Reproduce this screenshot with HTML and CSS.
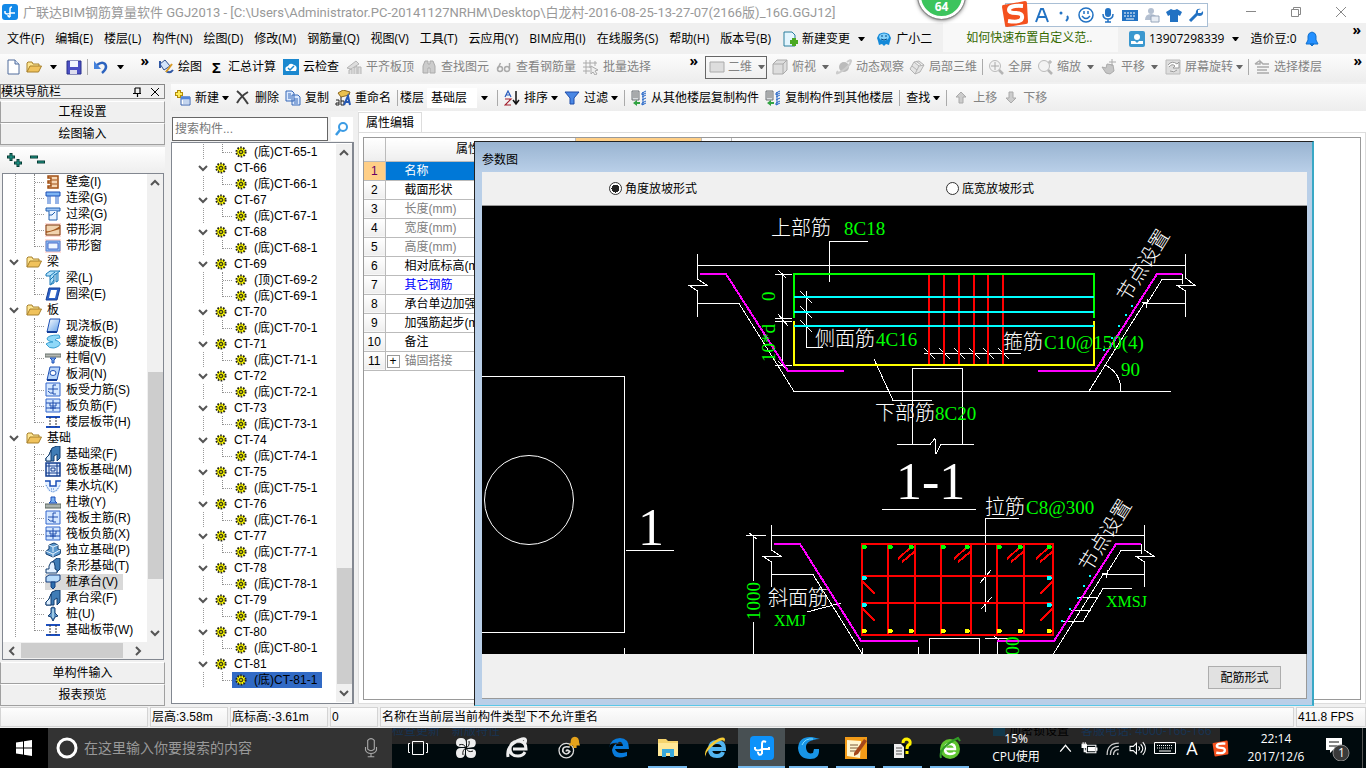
FILE: index.html
```html
<!DOCTYPE html>
<html lang="zh-CN">
	<head>
		<meta charset="utf-8">
		<title>广联达BIM钢筋算量软件 GGJ2013</title>
		<link rel="stylesheet" href="styles.css">
	</head>
	<body>
		<!-- shared icons -->
		<svg class="defs" width="0" height="0">
			<linearGradient id="sky" x2="1" y2="1"><stop offset="0" stop-color="#fff"/><stop offset="1" stop-color="#5f9ee8"/></linearGradient>
			<symbol id="gear" viewBox="0 0 12 12"><circle cx="6" cy="6" r="4.6" fill="#ff0" stroke="#222" stroke-width="2" stroke-dasharray="1.6 1.3"/><circle cx="6" cy="6" r="3.4" fill="#ff0"/><path d="M6 2v8M2 6h8M3 3l6 6M9 3L3 9" stroke="#665f00" stroke-width=".8"/><circle cx="6" cy="6" r="1.5" fill="#ff0" stroke="#222"/></symbol>
			<symbol id="folder" viewBox="0 0 16 16"><path d="M1 13V4l1-1h4l1 2h6v2" fill="#ffe793" stroke="#a7802c"/><path d="M1 13L4 7h11.500l-3 6z" fill="#f0c25c" stroke="#a7802c"/></symbol>
			<symbol id="niche" viewBox="0 0 16 16"><path d="M3 2h10v12H3v-2h3V9H3V7h3V4H3z" fill="#f6d6b4" stroke="#a04f13" stroke-width="1.500"/><path d="M7 6h5M7 10h5" stroke="#a04f13"/></symbol>
			<symbol id="link" viewBox="0 0 16 16"><path d="M1 2h14v4H1z" fill="#7db4f4" stroke="#1d4fb4"/><path d="M3 6v8M5 6v8M11 6v8M13 6v8" stroke="#2c69cf"/></symbol>
			<symbol id="lintel" viewBox="0 0 16 16"><path d="M1 2h14v3H1z" fill="#9cc4f5" stroke="#2360b0"/><path d="M4 5v9h8V5M4 9h3l3-3" fill="#e8f3ff" stroke="#2360b0"/></symbol>
			<symbol id="hole" viewBox="0 0 16 16"><path d="M0 1h16v14H0z" fill="#ffdcd6"/><path d="M1 3h14v10H1z" fill="#f1d3ae" stroke="#7c3d10"/><path d="M1 9q6 1 14-5v3L1 11z" fill="#a35a21"/></symbol>
			<symbol id="win" viewBox="0 0 16 16"><path d="M0 1h16v14H0z" fill="#ffdcd6"/><path d="M1 3h14v10H1z" fill="#8cb8ef" stroke="#5583d2"/><path d="M3 5h10v6H3z" fill="#eff7ff" stroke="#4a6ccb"/></symbol>
			<symbol id="beam" viewBox="0 0 16 16"><path d="M1 4l4-3h10l-4 3-2 1v8l-4 2V6L1 6zM11 4v8l2-1V3" fill="#b3e2fb" stroke="#1877b4"/><path d="M5 6l5-4M5 10l4-4M6 14l3-4" stroke="#1877b4"/></symbol>
			<symbol id="ring" viewBox="0 0 16 16"><path d="M4 2h11l-3 12H1z" fill="#2c61c5" stroke="#153e97"/><path d="M6 4h6l-2 8H4z" fill="#fff"/></symbol>
			<symbol id="slab" viewBox="0 0 16 16"><path d="M5 1h10l-3 13H2z" fill="url(#sky)" stroke="#1d50b5"/><path d="M2 14h10" stroke="#133e99" stroke-width="2"/></symbol>
			<symbol id="spiral" viewBox="0 0 16 16"><path d="M14 1Q2 1 2 5q0 2 6 3-5 0-7 2 3 5 8 4 7-2 6-5-1-2-5-3 1-2 5-2z" fill="#8fd8f8" stroke="#3ba0d2"/></symbol>
			<symbol id="cap" viewBox="0 0 16 16"><path d="M0 4h16v3H0z" fill="#b5b8b2" stroke="#66706c"/><path d="M5 8h6L9 10v3H7v-3z" fill="#78adf0" stroke="#1f50b8"/></symbol>
			<symbol id="slabhole" viewBox="0 0 16 16"><path d="M5 1h10l-3 13H2z" fill="#b8d5fa" stroke="#1d50b5"/><ellipse cx="8" cy="7" rx="3" ry="2.500" fill="#fff" stroke="#1d50b5"/><path d="M2 14h10" stroke="#133e99" stroke-width="2"/></symbol>
			<symbol id="bars" viewBox="0 0 16 16"><path d="M1 1h14v13H1z" fill="#d4e7ff" stroke="#3165cb"/><path d="M1 5h14M1 10h14M8 2v11M5 5v3h6V5M5 10h6" fill="none" stroke="#1e4cad"/></symbol>
			<symbol id="barmain" viewBox="0 0 16 16"><path d="M1 1h14v13H1z" fill="#d4e7ff" stroke="#3165cb"/><path d="M3 7h10M11 3H8v9h3M3 9q2 3 5 2" fill="none" stroke="#1e4cad"/></symbol>
			<symbol id="strip" viewBox="0 0 16 16"><path d="M1 3h14M1 13h14" stroke="#1c4fc0" stroke-width="2"/><path d="M5 3v10M11 3v10" stroke="#333" stroke-dasharray="2 1"/></symbol>
			<symbol id="fbeam" viewBox="0 0 16 16"><path d="M1 15v-3l3-3 3-7 5-2h3v12l-3 3V8l-3 2v5z" fill="#3f7cb6" stroke="#123d6e"/><path d="M1 15v-3l3-3 2-5v11z" fill="#dff0ff" stroke="#123d6e"/></symbol>
			<symbol id="footing" viewBox="0 0 16 16"><path d="M7 4l5-4h3v11l-4 4z" fill="#3f7cb6" stroke="#123d6e"/><path d="M1 15v-4h3V8l2-4h3l1 4v3l2 1v3z" fill="#e3f1ff" stroke="#123d6e"/></symbol>
			<symbol id="raft" viewBox="0 0 16 16"><path d="M1 1h14v13H1z" fill="#e3eeff" stroke="#123d8e" stroke-width="1.500"/><path d="M4 1v13M12 1v13M1 4h14M1 11h14" stroke="#123d8e"/><path d="M6 6h4v3H6z" fill="none" stroke="#123d8e"/></symbol>
			<symbol id="pit" viewBox="0 0 16 16"><path d="M0 3h5v5h6V3h5v4l-3 6-5 2-5-2-3-6z" fill="#e6f1ff"/><path d="M0 3h5v5h6V3h5" fill="none" stroke="#1b4fb8" stroke-width="1.500"/><path d="M1 7l3 5 4 2 4-2 3-5M6 11h4" fill="none" stroke="#3d77cc" stroke-dasharray="1 1"/></symbol>
			<symbol id="pier" viewBox="0 0 16 16"><path d="M0 10h16v4H0z" fill="#abb3ae" stroke="#59645f"/><path d="M6 3h4v4l2 2H4l2-2z" fill="#79b0f0" stroke="#1c4fb8"/></symbol>
			<symbol id="iso" viewBox="0 0 16 16"><path d="M1 9l3-2V3l5-2 4 2v4l3 1-1 4-7 3-7-3z" fill="#5d99ce" stroke="#143e70"/><path d="M4 3l4 2v5M8 5l5-2M1 9l7 3 7-4M8 12v3" fill="none" stroke="#e5f3ff"/></symbol>
			<symbol id="pilecap" viewBox="0 0 16 16"><path d="M1 3l3-2h11v5l-3 2H1z" fill="#b8dbfa" stroke="#153f80"/><path d="M6 8h4v5l-2 2-2-2z" fill="#2e6fae" stroke="#153f80"/></symbol>
			<symbol id="pile" viewBox="0 0 16 16"><path d="M6 2l2-1 2 1v5l3 3-3 1-2 4-2-4-3-1 3-3z" fill="#5b91c6" stroke="#153f70"/><path d="M8 3v9" stroke="#dff"/></symbol>
			<symbol id="down" viewBox="0 0 10 10"><path d="M1 3l4 4 4-4" fill="none" stroke="#555" stroke-width="2"/></symbol>
			<symbol id="sogou" viewBox="0 0 28 28"><path d="M2 5L24 1q2 0 2 2l1 19q0 2-2 2L6 27q-2 0-2-2L1 7q0-2 1-2z" fill="#f4511e"/><path d="M22 6Q8 5 8 10q0 3 7 3t6 5q-1 5-14 3" fill="none" stroke="#fff" stroke-width="4"/></symbol>
			<symbol id="copyfloor" viewBox="0 0 16 16"><path d="M1 1h7v9H1z" fill="#d9dde0" stroke="#6d7175"/><path d="M2 3h5M2 5h5M2 7h5" stroke="#777"/><path d="M12 2v13M15 1l-4 2v2l4-2M15 5l-4 2M15 8l-4 2M15 11l-4 2v2l4-2" fill="none" stroke="#2667c8"/><path d="M6 10v2h3v2H6v2l-4-3z" fill="#32a343"/></symbol>
			<symbol id="mag" viewBox="0 0 16 16"><circle cx="7" cy="7" r="5.500" fill="#f3f3f3" stroke="#bbb"/><path d="M11 11l4 4" stroke="#b5b5b5" stroke-width="2.500"/></symbol>
		</svg>

		<header class="titlebar">
			<svg class="i16" viewBox="0 0 16 16"><rect width="16" height="16" rx="3" fill="#1389e8"/><path d="M3 7v2q2 2 5 0h5M8 13V5q0-2 2-2M8 13q-2 0-2-2" fill="none" stroke="#fff" stroke-width="1.500"/></svg>
			<h1>广联达BIM钢筋算量软件 GGJ2013 - [C:\Users\Administrator.PC-20141127NRHM\Desktop\白龙村-2016-08-25-13-27-07(2166版)_16G.GGJ12]</h1>
			<button class="winbtn"><svg viewBox="0 0 12 12"><path d="M1 5.500h10"/></svg></button>
			<button class="winbtn"><svg viewBox="0 0 12 12"><path d="M1.500 3.500h7v7h-7zM3.500 3.500v-2h7v7h-2"/></svg></button>
			<button class="winbtn"><svg viewBox="0 0 12 12"><path d="M1 1l10 10M11 1L1 11"/></svg></button>
		</header>

		<nav class="menu">
			<button>文件(F)</button><button>编辑(E)</button><button>楼层(L)</button><button>构件(N)</button><button>绘图(D)</button><button>修改(M)</button><button>钢筋量(Q)</button><button>视图(V)</button><button>工具(T)</button><button>云应用(Y)</button><button>BIM应用(I)</button><button>在线服务(S)</button><button>帮助(H)</button><button>版本号(B)</button>
			<button class="tool"><svg class="i16" viewBox="0 0 16 16"><path d="M2 1h8l3 3v11H2z" fill="#e3f5fd" stroke="#2b7e9d"/><path d="M12 7v8M8 11h8" stroke="#4aa821" stroke-width="4"/></svg>新建变更<i class="arrow far"></i></button>
			<button class="tool"><svg class="i16" viewBox="0 0 16 16"><path d="M3 3L1 7l1 3 1 4 3-1 2 2 2-2 3 1 1-4 1-3-2-4q-5-3-10 0z" fill="#1489d8"/><ellipse cx="8" cy="6" rx="5" ry="3.500" fill="#83d1fb"/><path d="M6 4v2M10 4v2M5 8q3 2 6 0" stroke="#064a83" fill="none"/></svg>广小二</button>
			<a class="tip" href="#">如何快速布置自定义范..</a>
			<span class="account">
				<button class="tool"><svg class="i16" viewBox="0 0 16 16"><rect width="16" height="16" rx="2" fill="#3b98cf"/><circle cx="8" cy="6" r="3" fill="#fff"/><path d="M2 10h4l2 2 2-2h4v3H2z" fill="#fff"/></svg>13907298339<i class="arrow far"></i></button>
				<span>造价豆:0</span>
				<svg class="i16" viewBox="0 0 16 16"><path d="M3 11l1-2V5q0-3 4-4 4 1 4 4v4l1 2 1 2H2zM6 13h4l-2 2z" fill="#2490ff" stroke="#1370cc"/></svg>
				<b class="more">»</b>
			</span>
		</nav>

		<div class="toolbar">
			<div class="group files">
				<button class="tool"><svg class="i16" viewBox="0 0 16 16"><path d="M3 1h7l4 4v10H3z" fill="#fff" stroke="#506c9c"/><path d="M10 1v4h4" fill="#d6e3f7" stroke="#506c9c"/></svg></button>
				<button class="tool"><svg class="i16"><use href="#folder"/></svg><i class="arrow far"></i></button>
				<button class="tool"><svg class="i16" viewBox="0 0 16 16"><path d="M1 2h14v13H1z" fill="#4c50c4" stroke="#28308a"/><path d="M4 2h8v6H4z" fill="#f4f6ff"/><path d="M4 11h7v4H4z" fill="#dde"/></svg></button>
				<i class="sep"></i>
				<button class="tool"><svg class="i16" viewBox="0 0 16 16"><path d="M4 6q5-4 8-1 3 4-3 9" fill="none" stroke="#2c63bf" stroke-width="2.500"/><path d="M1 2v8h7z" fill="#4482dc"/></svg><i class="arrow far"></i></button>
				<b class="more">»</b>
			</div>
			<div class="group draw">
				<button class="tool"><svg class="i16" viewBox="0 0 16 16"><path d="M2 5l5-4 5 6-6 4z" fill="#d4e4fa" stroke="#31508b"/><path d="M2 2v7M8 12q4 3 7-1" stroke="#3158a4" stroke-width="2" fill="none"/><path d="M8 13l6-8" stroke="#d89b26" stroke-width="2"/></svg>绘图</button>
				<button class="tool"><b class="sigma">Σ</b>汇总计算</button>
				<button class="tool"><svg class="i16" viewBox="0 0 16 16"><rect width="16" height="16" fill="#1b88cf"/><path d="M3 12q-2-4 2-5 2-4 6-1 4 1 2 6z" fill="#fff"/><path d="M5 9l2 2 4-4" fill="none" stroke="#1b88cf" stroke-width="1.500"/></svg>云检查</button>
				<button class="tool" disabled><svg class="i16" viewBox="0 0 16 16"><path d="M1 9l9-7 3 3-8 5zM3 15v-4l3-1v5M8 15V9l3-2v8M12 15V8h3v7" fill="#ddd" stroke="#b5b5b5"/></svg>平齐板顶</button>
				<button class="tool" disabled><svg class="i16" viewBox="0 0 16 16"><path d="M2 7l2-5h3v3h2V2h3l2 5v7H9V9H7v5H2z" fill="#ccc" stroke="#aaa"/></svg>查找图元</button>
				<button class="tool" disabled><svg class="i16" viewBox="0 0 16 16"><circle cx="4" cy="10" r="2.500" fill="none" stroke="#aaa" stroke-width="1.500"/><circle cx="11" cy="10" r="2.500" fill="none" stroke="#aaa" stroke-width="1.500"/><path d="M1.500 10l3-6M13.500 10V4" stroke="#aaa" stroke-width="1.500"/></svg>查看钢筋量</button>
				<button class="tool" disabled><svg class="i16" viewBox="0 0 16 16"><path d="M3 1v14M7 1v8M0 4h14M0 8h8M0 12h7M12 2v5" stroke="#aaa"/><path d="M8 7l7 4-3 1 2 3-2 1-2-3-2 2z" fill="#eee" stroke="#aaa"/></svg>批量选择</button>
				<b class="more">»</b>
			</div>
			<div class="group view">
				<label class="dim"><svg class="i16" viewBox="0 0 16 16"><path d="M1 3h14v10H1z" fill="#ddd" stroke="#aaa"/></svg><select disabled><option>二维</option></select><i class="arrow"></i></label>
				<button class="tool" disabled><svg class="i16" viewBox="0 0 16 16"><path d="M1 5l4-4h10v10l-4 4H1z" fill="#ddd" stroke="#aaa"/><path d="M1 5h10v10M11 5l4-4" fill="none" stroke="#aaa"/></svg>俯视<i class="arrow far"></i></button>
				<button class="tool" disabled><svg class="i16" viewBox="0 0 16 16"><circle cx="8" cy="8" r="5" fill="#bbb"/><path d="M2 12Q-2 17 6 12T15 2q0-2-4 1" fill="none" stroke="#ccc" stroke-width="2"/></svg>动态观察</button>
				<button class="tool" disabled><svg class="i16" viewBox="0 0 16 16"><path d="M1 10l4-7 5-1 5 4-4 7-5 2zM5 3l5 4 5-1M10 7l-4 8M3 7l5 4M7 2l5 4" fill="#e4e4e4" stroke="#b3b3b3"/></svg>局部三维</button>
				<i class="sep"></i>
				<button class="tool" disabled><svg class="i16"><use href="#mag"/><path d="M7 3v8M3 7h8" stroke="#aaa"/></svg>全屏</button>
				<button class="tool" disabled><svg class="i16"><use href="#mag"/><path d="M11 3h4M13 1v4" stroke="#aaa"/></svg>缩放<i class="arrow far"></i></button>
				<button class="tool" disabled><svg class="i16" viewBox="0 0 16 16"><path d="M1 8l4 1 1-4 6 1 1 6-4 3-4-1z" fill="#c5c5c5" stroke="#aaa"/><path d="M11 0v7M8 3h7" stroke="#aaa"/></svg>平移<i class="arrow far"></i></button>
				<button class="tool" disabled><svg class="i16" viewBox="0 0 16 16"><path d="M1 1h14v14H1z" fill="#ddd" stroke="#bbb"/><path d="M3 6q4-5 9-1l2-2v6H8l2-2Q7 4 4 8M12 11q-3 3-7 1" fill="#fff" stroke="#999"/></svg>屏幕旋转<i class="arrow"></i></button>
				<i class="sep"></i>
				<button class="tool" disabled><svg class="i16" viewBox="0 0 16 16"><path d="M1 5h5V2l3 3h6M3 8h12M3 11h10M3 14h12M1 5l4-3" fill="none" stroke="#aaa" stroke-width="1.500"/></svg>选择楼层</button>
				<b class="more">»</b>
			</div>
		</div>

		<main>
			<aside class="nav">
				<div class="nav-title"><span>模块导航栏</span>
					<button><svg viewBox="0 0 10 10"><path d="M3 1h5v5M3 1v5M1 6.500h8M5.500 6v4" fill="none" stroke="#000" stroke-width="1.200"/></svg></button>
					<button><svg viewBox="0 0 10 10"><path d="M1 1l8 8M9 1L1 9" stroke="#000"/></svg></button>
				</div>
				<button class="section">工程设置</button>
				<button class="section">绘图输入</button>
				<div class="nav-tools">
					<svg viewBox="0 0 40 16"><path d="M1 5h8M5 1v8M8 11h8M12 7v8M24 5h8M31 10h8" stroke="#043a33" stroke-width="3"/><path d="M2 5h6M5 2v6M9 11h6M12 8v6M25 5h6M32 10h6" stroke="#21a293"/></svg>
				</div>
				<div class="box nav-box">
					<div class="scroll-row">
						<ul class="tree" id="modules"></ul>
						<div class="vbar"><svg class="up"><use href="#down"/></svg><i class="thumb modules-thumb"></i><svg><use href="#down"/></svg></div>
					</div>
					<div class="hbar"><svg class="left"><use href="#down"/></svg><i class="thumb"></i><svg class="right"><use href="#down"/></svg></div>
				</div>
				<button class="section">单构件输入</button>
				<button class="section">报表预览</button>
			</aside>

			<section class="work">
				<div class="toolbar second">
					<button class="tool"><svg class="i16" viewBox="0 0 16 16"><path d="M6 7h9v8H6z" fill="#fff" stroke="#3561ae"/><path d="M6 8h9" stroke="#5185dc" stroke-width="3"/><path d="M8 11h6M8 13h6" stroke="#88aadd"/><path d="M4 0v8M0 4h8" stroke="#b38c0b" stroke-width="4"/><path d="M4 1v6M1 4h6" stroke="#ffec59" stroke-width="2"/></svg>新建<i class="arrow"></i></button>
					<button class="tool"><svg class="i16" viewBox="0 0 16 16"><path d="M2 1q5 4 11 13M13 2Q6 6 2 13" fill="none" stroke="#404040" stroke-width="2"/></svg>删除</button>
					<button class="tool"><svg class="i16" viewBox="0 0 16 16"><path d="M1 1h6l2 2v8H1zM7 5h6l2 2v8H7z" fill="#dceaff" stroke="#3768b7"/><path d="M3 4h3M3 6h3M3 8h3M9 9h4M9 11h4M9 13h4" stroke="#3768b7"/></svg>复制</button>
					<button class="tool"><svg class="i16" viewBox="0 0 16 16"><path d="M3 3l5-3 7 2-1 3-8 2z" fill="#eac14f" stroke="#8c6720"/><path d="M1 10h3v5H1v-2h3M6 7v8h3v-4H6" fill="none" stroke="#222"/><path d="M9 15l4-9 2 9M11 12h4" fill="none" stroke="#2759b3" stroke-width="2"/></svg>重命名</button>
					<i class="sep"></i>
					<label class="floor">楼层<select><option>基础层</option></select><i class="arrow"></i></label>
					<i class="sep"></i>
					<button class="tool"><svg class="i16" viewBox="0 0 16 16"><path d="M1 7l3-6 3 6M2 5h4" fill="none" stroke="#275bbb" stroke-width="1.200"/><path d="M1 9h6l-6 6h6" fill="none" stroke="#a21c2b" stroke-width="1.200"/><path d="M12 1v12M9 10l3 4 3-4" fill="none" stroke="#111" stroke-width="1.500"/></svg>排序<i class="arrow"></i></button>
					<button class="tool"><svg class="i16" viewBox="0 0 16 16"><path d="M1 2h14l-5 6v6H6V8z" fill="#4a87e4" stroke="#1e4ca9"/></svg>过滤<i class="arrow"></i></button>
					<i class="sep"></i>
					<button class="tool"><svg class="i16"><use href="#copyfloor"/></svg>从其他楼层复制构件</button>
					<button class="tool"><svg class="i16"><use href="#copyfloor"/></svg>复制构件到其他楼层</button>
					<i class="sep"></i>
					<button class="tool">查找<i class="arrow"></i></button>
					<i class="sep"></i>
					<button class="tool" disabled><svg class="i16" viewBox="0 0 16 16"><path d="M8 2l5 5h-3v6H6V7H3z" fill="#ccc" stroke="#aaa"/></svg>上移</button>
					<button class="tool" disabled><svg class="i16" viewBox="0 0 16 16"><path d="M8 13L3 8h3V2h4v6h3z" fill="#ccc" stroke="#aaa"/></svg>下移</button>
				</div>
				<div class="panes">
					<div class="parts">
						<div class="search">
							<input type="text" placeholder="搜索构件..." aria-label="搜索构件...">
							<button><svg class="i16" viewBox="0 0 16 16"><circle cx="9" cy="6" r="4" fill="#fff" stroke="#3b9be4" stroke-width="2"/><path d="M6 9l-4 5" stroke="#3b9be4" stroke-width="2.500"/></svg></button>
						</div>
						<div class="box scroll-row">
							<ul class="tree parts-tree" id="parts"></ul>
							<div class="vbar"><svg class="up"><use href="#down"/></svg><i class="thumb parts-thumb"></i><svg><use href="#down"/></svg></div>
						</div>
					</div>
					<div class="props">
						<div class="tabs"><button>属性编辑</button></div>
						<div class="props-body">
							<div class="grid-box">
								<table>
									<thead><tr><th></th><th>属性名称</th><th class="hot"></th><th></th></tr></thead>
									<tbody>
										<tr class="sel"><th>1</th><td>名称</td><td></td><td></td></tr>
										<tr><th>2</th><td>截面形状</td><td></td><td></td></tr>
										<tr class="off"><th>3</th><td>长度(mm)</td><td></td><td></td></tr>
										<tr class="off"><th>4</th><td>宽度(mm)</td><td></td><td></td></tr>
										<tr class="off"><th>5</th><td>高度(mm)</td><td></td><td></td></tr>
										<tr><th>6</th><td>相对底标高(m)</td><td></td><td></td></tr>
										<tr class="blue"><th>7</th><td>其它钢筋</td><td></td><td></td></tr>
										<tr><th>8</th><td>承台单边加强筋</td><td></td><td></td></tr>
										<tr><th>9</th><td>加强筋起步(mm)</td><td></td><td></td></tr>
										<tr><th>10</th><td>备注</td><td></td><td></td></tr>
										<tr class="off fold"><th>11</th><td><button>+</button>锚固搭接</td><td></td><td></td></tr>
									</tbody>
								</table>
							</div>
						</div>
					</div>
				</div>
			</section>
		</main>

		<div class="status">
			<span class="s-blank"></span><span class="s-height">层高:3.58m</span><span class="s-base">底标高:-3.61m</span><span class="s-zero">0</span><span class="s-msg">名称在当前层当前构件类型下不允许重名</span><span class="s-fps">411.8 FPS</span>
		</div>

		<footer class="taskbar">
			<button class="start"><svg viewBox="0 0 16 16"><path d="M0 2.500l7-1v6H0zM8 1.300L16 0v7.500H8zM0 8.500h7v6l-7-1zM8 8.500h8V16l-8-1.200z" fill="#fff"/></svg></button>
			<label class="cortana"><svg viewBox="0 0 22 22"><circle cx="11" cy="11" r="9" fill="none" stroke="#fff" stroke-width="3"/></svg><input type="text" placeholder="在这里输入你要搜索的内容" aria-label="在这里输入你要搜索的内容"><svg viewBox="0 0 16 20"><path d="M5 3q3-3 6 0v8q-3 3-6 0zM3 9v3q1 3 5 3t5-3V9M8 15v3M5 18h6" fill="none" stroke="#aaa"/></svg></label>
			<div class="apps">
				<span class="ghost"><span>检查更新</span><span>新版特性</span></span>
				<span class="ghost right"><i></i><span class="dark">加密锁设置</span><span>客服电话: 4000-166-166</span></span>
				<button class="view"><svg viewBox="0 0 24 24"><path d="M6.500 5.500h11v13h-11zM4 7.500H2.500v9H4M20 7.500h1.500v9H20" fill="none" stroke="#fff"/></svg></button>
				<button><svg viewBox="0 0 24 24"><g fill="#eee"><path d="M2 7q0-5 5-5 5 0 5 5v4H7q-5 0-5-4z"/><path d="M13 4q4-3 8 0 2 4-1 7l-7 1z"/><path d="M2 17q0-5 5-5h4v5q0 5-5 5-4 0-4-5z"/><path d="M12 13h6q4 0 4 4 0 5-5 5-5 0-5-4z"/></g><path d="M5 9q5-2 7 3t7 3M15 5q1 5-3 7t-3 7" fill="none" stroke="#111"/></svg></button>
				<button><svg viewBox="0 0 24 24"><path d="M8 13h13q0-8-8-8-8 1-8 8 0 7 8 7 5 0 7-4M3 21Q1 8 17 3q5-1 3 4" fill="none" stroke="#eee" stroke-width="3"/></svg></button>
				<button><svg viewBox="0 0 28 28"><circle cx="12" cy="17" r="8.500" fill="none" stroke="#ddd" stroke-width="1.500"/><path d="M16 13q-9-2-8 5 4 6 8 0-4-3-4 0" fill="none" stroke="#ddd" stroke-width="2"/><path d="M15 11l2-3q0-7 5-7t5 7l1 3zM20 11h4v3h-4z" fill="#e4a21b"/></svg></button>
				<button><svg viewBox="0 0 24 24"><path d="M2 12Q4 2 13 2q9 0 9 11H8q2 6 12 3v4Q6 25 5 14q1-6 7-7-10-1-10 5zM9 10h7q-1-5-4-4-3 1-3 4z" fill="#087bdc"/></svg></button>
				<button class="run wide"><svg viewBox="0 0 24 24"><path d="M2 3h8l2 2h10v15H2z" fill="#f5d36c"/><path d="M2 7h20v13H2z" fill="#ffe897"/><path d="M6 21v-8h12v8h-4v-4h-4v4z" fill="#39a9dc"/></svg></button>
				<button><svg viewBox="0 0 24 24"><path d="M7 13h14q0-7-7-7-7 0-7 7 0 7 7 7 5 0 6-4" fill="none" stroke="#52b4ef" stroke-width="4"/><path d="M3 22Q-1 15 10 6q10-7 12-3 0 2-1 3 0-4-8 1Q0 17 3 22z" fill="#f5cb36"/></svg></button>
				<button class="run active"><svg viewBox="0 0 24 24"><rect width="24" height="24" rx="4" fill="#0d92fa"/><path d="M5 11v2q2 3 7 0h7v-2M12 18V8q0-4 4-2M12 18q-4 2-4-2" fill="none" stroke="#fff" stroke-width="2"/></svg></button>
				<button class="run"><svg viewBox="0 0 24 24"><path d="M23 3Q8 4 9 12q1 7 7 5l1-4h5q1 10-9 10Q2 23 1 12 2 0 15 1z" fill="#1895e6"/><path d="M5 9q3-7 11-6" fill="none" stroke="#81dfff"/></svg></button>
				<button class="run"><svg viewBox="0 0 24 24"><rect x="1" y="1" width="22" height="22" fill="#f29b18"/><path d="M3 4l14 1-1 17-13-2z" fill="#fff5cf"/><path d="M6 9h8M6 12h8M6 15h6" stroke="#78583a"/><path d="M10 17L20 3l3 2-9 13-4 2z" fill="#a5471b"/></svg></button>
				<button class="run"><svg viewBox="0 0 24 24"><path d="M3 8h7l3 3v11H3z" fill="#eee"/><path d="M5 12h6M5 15h6M5 18h6" stroke="#555"/><path d="M12 7q0-4 4-4 4 1 3 5-3 1-3 5M16 15v3" fill="none" stroke="#fff200" stroke-width="3"/></svg></button>
				<button class="run wide"><svg viewBox="0 0 24 24"><circle cx="12" cy="13" r="10" fill="#61c632"/><path d="M7 13h10q0-5-5-5t-5 5q0 5 5 5 4 0 5-2" fill="none" stroke="#fff" stroke-width="2.500"/><path d="M3 22Q0 12 20 2l2 3" fill="none" stroke="#329e26" stroke-width="2"/></svg></button>
			</div>
			<div class="cpu">15%<br>CPU使用</div>
			<div class="tray">
				<svg viewBox="0 0 16 16"><path d="M3 11l5-6 5 6" fill="none" stroke="#fff" stroke-width="1.200"/></svg>
				<svg viewBox="0 0 16 16"><path d="M5 5h9v7H5zM15 7v3" fill="none" stroke="#fff"/><path d="M7 7h6v3H7zM1 4h4v3H1zM2 2v2M4 2v2M3 7v4h2" fill="#fff" stroke="#fff"/></svg>
				<svg viewBox="0 0 16 16"><path d="M12 14v-2M8 14q0-5 5-5M5 14q0-8 8-8M2 14Q2 3 13 3" fill="none" stroke="#ccc" stroke-width="1.200"/></svg>
				<svg viewBox="0 0 16 16"><path d="M1 6h3l3-3v10l-3-3H1zM9 6q2 2 0 4M11 4q4 4 0 8M13 2q5 6 0 12" fill="none" stroke="#fff"/></svg>
				<svg class="kb" viewBox="0 0 24 14"><path d="M1.500 1.500h21v11h-21z" fill="none" stroke="#fff"/><path d="M4 4.500h16M4 7h16" stroke="#fff" stroke-dasharray="1 1"/><path d="M6 10h12" stroke="#fff"/></svg>
				<span class="lang">A</span>
				<svg viewBox="0 0 28 28"><use href="#sogou"/></svg>
			</div>
			<div class="clock">22:14<br>2017/12/6</div>
			<button class="notice"><svg viewBox="0 0 26 26"><path d="M2 3h16v12H9l-3 3v-3H2z" fill="#fff"/><path d="M5 7h10M5 11h8" stroke="#111"/><circle cx="17" cy="18" r="8" fill="#3a3a3a" stroke="#888"/><text x="14" y="22">1</text></svg></button>
		</footer>

		<!-- floating things over the main window -->
		<div class="ball">64</div>
		<div class="ime">
			<svg class="logo"><use href="#sogou"/></svg>
			<svg viewBox="0 0 16 16"><path d="M2 15L7 2h2l5 13M4 10h8" fill="none" stroke="#2272c3" stroke-width="2"/></svg>
			<svg viewBox="0 0 16 16"><circle cx="5" cy="6" r="1.500" fill="#2272c3"/><path d="M11 9q2 2-1 5" fill="none" stroke="#2272c3" stroke-width="2"/></svg>
			<svg viewBox="0 0 16 16"><circle cx="8" cy="8" r="7" fill="none" stroke="#2272c3" stroke-width="1.500"/><path d="M6 4v3M10 4v3M4 9q4 5 8 0" fill="none" stroke="#2272c3" stroke-width="1.500"/></svg>
			<svg viewBox="0 0 16 16"><rect x="5" y="1" width="6" height="9" rx="3" fill="#2272c3"/><path d="M3 7q0 5 5 5t5-5M8 12v3M5 15h6" fill="none" stroke="#2272c3" stroke-width="1.500"/></svg>
			<svg viewBox="0 0 16 16"><rect y="3" width="16" height="11" fill="#2272c3"/><path d="M2 6h12M2 9h12" stroke="#fff" stroke-dasharray="2 1"/><path d="M4 12h8" stroke="#fff"/></svg>
			<svg viewBox="0 0 16 16"><circle cx="7" cy="4" r="3" fill="#b4c0d1"/><path d="M1 13q0-6 6-6t6 6z" fill="#b4c0d1"/><path d="M7 9h8v6H7z" fill="#e8edf4" stroke="#97a6bb"/></svg>
			<svg viewBox="0 0 16 16"><path d="M5 2q3 2 6 0l5 3-2 4-2-1v7H4V8L2 9 0 5z" fill="#2272c3"/></svg>
			<svg viewBox="0 0 16 16"><path d="M2 14l7-7" stroke="#2272c3" stroke-width="3"/><path d="M13 2l-3 1v3h3l2-2q1 5-4 5-4-1-3-5 1-3 5-2z" fill="#2272c3"/></svg>
		</div>

		<section class="dialog">
			<h2>参数图</h2>
			<div class="options">
				<label><input type="radio" name="form" checked>角度放坡形式</label>
				<label><input type="radio" name="form">底宽放坡形式</label>
			</div>
			<svg class="cad" viewBox="482 206 825 448" preserveAspectRatio="xMinYMin slice">
				<!-- plan -->
				<g class="w">
					<path d="M482 376.500h142.500v256H482M624.500 648v8M626 550.500h48"/>
					<circle cx="529" cy="500" r="44.500"/>
				</g>
				<text class="big" x="638" y="545">1</text>

				<!-- section 1-1 -->
				<g class="w">
					<path d="M697 265.500h488M697.500 254v25l9 6h-18l9 6v26M697 303.500h42l55 88h377"/>
					<path d="M829.500 282v-40.500H868M782.500 273v92M775 274.500h17M775 318.500h17M775 321.500h17M775 365.500h17M778 270l8 8M778 314l10 12M778 361l10 10"/>
					<path d="M806.500 291v56.500H823M800 291l12 12M800 306l12 12M800 320l12 12"/>
					<path d="M924 353.500h97M924 348l11 11M939 348l11 11M954 348l11 11M969 348l11 11M983 348l11 11M998 348l11 11"/>
					<path d="M874 359l19 41.500h39M912.500 444v-75.500h50V444M897 444.500h33l5-6 1 15 5-9h33"/>
					<path d="M1185.500 254v24l9 7h-18l9 6v26M1185 303.500h-41L1089 391M1182.500 274v10M1182 279.500h-20l-15 24M1142 302l9 2M1148 299l-2 9M1105 365q16 8 16 26"/>
				</g>
				<path class="m" d="M700 274h26l62 97h56M1038 371h57l62-97h25"/>
				<path class="g" d="M794 318v-44h300v44"/>
				<path class="r" d="M929 275v90M944 275v90M959 275v90M974 275v90M988 275v90M1003 275v90"/>
				<path class="y" d="M794 321v44h300v-44"/>
				<path class="c" d="M794 297h300M794 312h300M794 326h300"/>
				<path class="dot c" d="M1132 306h.1M1126 315h.1M1119 326h.1M1112 338h.1M1104 350h.1"/>
				<text x="771" y="235">上部筋</text><text class="n" x="844" y="235">8C18</text>
				<text x="815" y="346">侧面筋</text><text class="n" x="876" y="346">4C16</text>
				<text x="1003" y="349">箍筋</text><text class="n" x="1044" y="349">C10@150(4)</text>
				<text x="875" y="420">下部筋</text><text class="n" x="935" y="420">8C20</text>
				<text class="n" x="1121" y="376">90</text>
				<text class="n" transform="translate(775 301) rotate(-90)">0</text>
				<text class="n" transform="translate(775 362) rotate(-90)">10*d</text>
				<text transform="translate(1128 303) rotate(-58)">节点设置</text>

				<text class="big" x="896" y="499">1-1</text>

				<!-- cross section -->
				<g class="w">
					<path d="M882 509.500h94M985.500 612v-93.500h33M980 583l11-13M981 609l11-12"/>
					<path d="M771 535.500h373M771.500 525v25l9 6h-18l9 6v25M771 574.500h42l49 79M862.500 648v8M918.500 647v9M929.500 656v-17.500h50V656"/>
					<path d="M746 535.500h20M753.500 535v46M753.500 622v34M749 533l8 6M807 612l34-9M985 638.500h24M997.500 641v15M994 636l5 4"/>
					<path d="M1144.500 525v25l9 6h-18l9 6v25M1144 574.500h-41l-50 80M1141.500 544v10M1141 550.500h-20l-15 24M1102 573l9 2M1108 570l-2 8"/>
					<path d="M1132 588.500h-29l-20 33h-21M1098 597.500h-19M1091 610.500h-20"/>
				</g>
				<path class="m" d="M774 544h26l61 97h57M997 641h57l62-97h25"/>
				<path class="r" d="M862 544h191v91H862zM888 544v91M915 544v91M941 544v91M971 544v91M997 544v91M1024 544v91M862 576h191M862 603h191"/>
				<path class="r" d="M912 546l-14 13M914 552l-12 10M968 546l-14 13M970 552l-12 10M1021 546l-14 13M1023 552l-12 10M1050 546l-14 13M1052 552l-12 10M863 582l12 12M863 609l12 12M1052 582l-12 12M1052 609l-12 12"/>
				<path class="dot big-dot g" d="M864 547h.1M890 547h.1M911 547h.1M943 547h.1M967 547h.1M999 547h.1M1020 547h.1M1049 547h.1"/>
				<path class="dot big-dot y" d="M864 631h.1M890 631h.1M911 631h.1M943 631h.1M967 631h.1M999 631h.1M1020 631h.1M1049 631h.1"/>
				<path class="dot big-dot c" d="M864 578h.1M864 605h.1M1049 578h.1M1049 605h.1"/>
				<path class="dot c" d="M1090 576h.1M1084 586h.1M1078 598h.1M1070 609h.1M1062 621h.1"/>
				<text x="985" y="514">拉筋</text><text class="n" x="1026" y="514">C8@300</text>
				<text x="768" y="605">斜面筋</text><text class="n small" x="774" y="626">XMJ</text>
				<text class="n small" x="1106" y="607">XMSJ</text>
				<text class="n" transform="translate(760 620) rotate(-90)">1000</text>
				<text class="n" transform="translate(1019 665) rotate(-90)">000</text>
				<text transform="translate(1090 573) rotate(-58)">节点设置</text>
			</svg>
			<div class="actions"><button>配筋形式</button></div>
		</section>

		<script src="script.js"></script>
	</body>
</html>
```
FILE: styles.css
```css
* {
	box-sizing: border-box;
	margin: 0; padding: 0;
}

body {
	display: flex;
	flex-direction: column;
	height: 100vh;
	overflow: hidden;
	position: relative;
	font: 12px/16px "Open Sans", "Noto Sans CJK SC", sans-serif;
	color: #000;
	background: #f0f0f0;
}

button, input, select {
	font: inherit;
	color: inherit;
	border: 0;
	background: none;
	white-space: nowrap;
}

svg { display: block; flex: none; }
ul { list-style: none; }

.defs { position: absolute; }
.i16 { width: 16px; height: 16px; }

.arrow {
	flex: none;
	width: 7px;
	margin-left: 1px;
	border: 3px solid transparent;
	border-top: 4px solid #000;
	border-bottom: 0;
}

.arrow.far { margin: 0 4px; }

.sep {
	flex: none;
	width: 1px; height: 16px;
	background: #aaa;
}

.more {
	margin-left: auto;
	align-self: flex-start;
	font-size: 14px;
	line-height: 14px;
}

/* title and menu */

.titlebar {
	display: flex;
	align-items: center;
	gap: 5px;
	flex: none;
	height: 23px;
	padding: 0 11px 0 2px;
	background: #fff;
}

.titlebar h1 {
	flex: 1;
	font: 13px "Roboto", "Noto Sans CJK SC", sans-serif;
	color: #999;
	white-space: nowrap;
}

.winbtn { width: 40px; padding-left: 20px; }
.winbtn svg { width: 12px; fill: none; stroke: #888; }

.menu {
	display: flex;
	align-items: center;
	gap: 11px;
	flex: none;
	height: 31px;
	padding: 0 5px 0 7px;
	white-space: nowrap;
}

.menu .tool { gap: 4px; }
.menu > .tool .arrow { margin-right: 0; }

.tip {
	flex: 1;
	align-self: stretch;
	padding: 7px 0 0 23px;
	margin-bottom: 2px;
	color: #356a00;
	background: #f8f8f8;
	text-decoration: none;
}

.account {
	display: flex;
	align-items: center;
	align-self: stretch;
	gap: 7px;
	width: 232px;
}

/* toolbars */

.toolbar {
	display: flex;
	flex: none;
	height: 28px;
	margin-bottom: 2px;
	background: linear-gradient(#fcfcfc, #ededed);
}

.group {
	display: flex;
	align-items: center;
	gap: 7px;
	padding: 0 4px 2px 5px;
}

.files { flex: 0 0 153px; gap: 5px; }
.draw { flex: 0 0 549px; }
.view { flex: 1; gap: 5px; padding-left: 3px; }

.tool {
	display: flex;
	align-items: center;
	gap: 4px;
	flex: none;
}

.tool .arrow { margin-left: -1px; }
.tool .arrow.far { margin-left: 4px; }
.tool:disabled { color: #838383; }
.tool:disabled .arrow { border-top-color: #666; }
.view .tool .arrow.far { margin: 0 2px; }

.sigma { width: 15px; font-size: 15px; }

.dim {
	display: flex;
	align-items: center;
	gap: 3px;
	height: 23px;
	width: 62px;
	padding: 0 3px;
	border: 1px solid #666;
	color: #838383;
}

.dim select {
	width: 26px;
	appearance: none;
	opacity: 1;
}

.dim .arrow { margin-left: 2px; border-top-color: #666; }

.second {
	align-items: center;
	gap: 6px;
	height: 27px;
	margin: 0;
	padding-left: 4px;
}

.floor {
	display: flex;
	align-items: center;
	gap: 3px;
	margin-left: -4px;
}

.floor select {
	appearance: none;
	width: 50px;
	height: 20px;
	padding-left: 4px;
	background: #fff;
}

.floor .arrow { margin-right: 3px; }

/* module panel */

main {
	display: flex;
	gap: 6px;
	flex: 1;
	min-height: 0;
	font-family: "Liberation Sans", "Noto Sans CJK SC", sans-serif;
}

.nav {
	display: flex;
	flex-direction: column;
	flex: none;
	width: 165px;
}

.nav-title {
	display: flex;
	align-items: center;
	height: 15px;
	border: 1px solid #888;
	margin-bottom: 2px;
}

.nav-title span { flex: 1; }
.nav-title button { width: 18px; padding-left: 4px; }
.nav-title svg { width: 10px; }

.section {
	flex: none;
	height: 22px;
	border: 1px solid #a0a0a0;
	border-top-color: #fff;
	background: #f0f0f0;
}

.nav-tools {
	height: 28px;
	padding: 5px 6px;
	border-top: 2px solid #ddd;
	background: linear-gradient(#fff, #eee);
}

.nav-tools svg { width: 40px; height: 16px; }

.box {
	border: 1px solid #828790;
	background: #fff;
}

.nav-box {
	display: flex;
	flex-direction: column;
	flex: 1;
	min-height: 0;
	margin: 0 1px 2px 2px;
}

.scroll-row {
	display: flex;
	flex: 1;
	min-height: 0;
}

.tree {
	flex: 1;
	overflow: hidden;
	position: relative;
}

.tree li {
	display: flex;
	align-items: center;
	height: 16px;
	padding-left: 6px;
	white-space: nowrap;
}

.tree li svg { width: 16px; height: 16px; }
.tree .chev { width: 10px; height: 10px; margin-right: 7px; }

.tree .name {
	display: flex;
	align-items: center;
	gap: 5px;
	padding: 0 5px 0 0;
}

.tree .twig {
	width: 11px; height: 16px;
	margin: 0 0 0 25px;
	background: linear-gradient(90deg, #999 1px, transparent 1px) 0 0 / 2px 1px repeat-x;
	background-position: 0 8px;
	border-left: 1px dotted #888;
}

.tree .child { background: linear-gradient(#999 50%, transparent 50%) 12px 0 / 1px 2px repeat-y; }
.tree .child.last .twig { height: 9px; align-self: flex-start; }
.tree .chosen .name { background: #d9d9d9; }

.vbar, .hbar {
	display: flex;
	flex: none;
	flex-direction: column;
	align-items: center;
	width: 16px;
	padding: 4px 0;
	background: #f0f0f0;
}

.vbar svg, .hbar svg { width: 10px; height: 10px; }
.vbar .up { transform: rotate(180deg); }
.hbar .left { transform: rotate(90deg); }
.hbar .right { transform: rotate(-90deg); margin-left: 10px; }
.thumb { background: #cdcdcd; }
.vbar .thumb { width: 15px; margin-bottom: auto; }
.modules-thumb { height: 45%; margin-top: 184px; }
.parts-thumb { height: 116px; margin-top: auto; }
.vbar .parts-thumb { margin-bottom: 4px; }

.hbar {
	flex-direction: row;
	width: 100%; height: 17px;
	padding: 0 4px;
}

.hbar .thumb { width: 102px; height: 15px; margin-left: 4px; }

/* component list */

.work {
	display: flex;
	flex-direction: column;
	flex: 1;
	min-width: 0;
}

.panes {
	display: flex;
	gap: 4px;
	flex: 1;
	min-height: 0;
}

.parts {
	display: flex;
	flex-direction: column;
	flex: none;
	width: 183px;
	padding: 5px 0 2px;
}

.search {
	display: flex;
	gap: 3px;
	height: 26px;
	padding: 1px;
}

.search input {
	flex: 1;
	min-width: 0;
	padding: 0 2px;
	border: 1px solid #666;
	background: #fff;
}

.search button {
	width: 22px;
	padding: 4px 3px;
	background: #fff;
}

::placeholder { color: #777; opacity: 1; }

.parts .box { border-right-width: 2px; padding: 1px 0; }
.parts .tree li { padding-left: 26px; }
.parts .tree .chev { margin-right: 4px; }
.parts .tree li .name svg { width: 12px; height: 12px; }
.parts .tree .name { gap: 7px; padding-left: 3px; }
.parts .tree .twig { margin-left: 24px; }
.parts .tree .child { background-position: 31px 0; }
.parts .tree li.child .twig { width: 10px; }
.parts .tree .chosen .name { background: #316ac5; }

/* property grid */

.props {
	display: flex;
	flex-direction: column;
	flex: 1;
	min-width: 0;
}

.tabs { height: 21px; padding-top: 1px; background: #fff; }

.tabs button {
	height: 21px;
	padding: 0 7px;
	border: 1px solid #ddd;
	border-bottom: 0;
	background: #fff;
}

.props-body {
	flex: 1;
	min-height: 0;
	padding: 4px 4px 3px;
	margin-bottom: 2px;
	border: 1px solid #ddd;
	background: #fff;
}

.grid-box {
	height: 100%;
	border: 1px solid #999;
}

table {
	width: 368px;
	table-layout: fixed;
	border-collapse: collapse;
}

tr { height: 19px; }
thead tr { height: 23px; }

th, td {
	border: solid #bbb;
	border-width: 0 1px 1px 0;
	font-weight: normal;
	line-height: 16px;
	white-space: nowrap;
	overflow: hidden;
}

th { background: linear-gradient(#fff, #eee); }
th:first-child { width: 21px; }
th:nth-child(2) { width: 190px; }
th:nth-child(3) { width: 126px; }
td { padding-left: 19px; }
.hot, .sel th { background: #ffcf87; }
.sel th { color: #606; }
.sel td { color: #fff; background: #0078d7; }
.off td { color: #808080; }
.blue td { color: #00f; }
.fold td { padding-left: 1px; }

.fold button {
	width: 13px; height: 13px;
	margin-right: 5px;
	border: 1px solid #999;
	color: #000;
	line-height: 10px;
	vertical-align: middle;
}

/* status and taskbar */

.status {
	display: flex;
	gap: 2px;
	flex: none;
	height: 22px;
	padding: 1px 0;
	font-family: "Liberation Sans", "Noto Sans CJK SC", sans-serif;
	white-space: nowrap;
}

.status span {
	padding: 1px;
	border: 1px solid #d4d4d4;
	background: linear-gradient(#fdfdfd, #f0f0f0);
}

.s-blank { width: 148px; }
.s-height { width: 78px; }
.s-base { width: 98px; }
.s-zero { width: 48px; }
.s-msg { flex: 1; }
.s-fps { width: 70px; }

.taskbar {
	display: flex;
	align-items: stretch;
	flex: none;
	height: 40px;
	color: #fff;
	background: #000a0d;
}

.start {
	width: 48px;
	padding-left: 16px;
	background: #000;
}

.start svg { width: 16px; }

.cortana {
	display: flex;
	align-items: center;
	gap: 6px;
	width: 344px;
	padding: 0 10px 0 8px;
	background: #333;
}

.cortana svg { width: 22px; height: 22px; }
.cortana input { flex: 1; min-width: 0; font-size: 14px; }
.cortana ::placeholder { color: #999; }

.apps {
	display: flex;
	flex: 1;
	position: relative;
	background: linear-gradient(#262626 16px, transparent 16px);
}

.apps button {
	display: flex;
	align-items: center;
	justify-content: center;
	width: 51px;
	position: relative;
}

.apps .view { width: 48px; flex: none; }
.apps .wide, .apps .wide ~ button { width: 47px; }
.apps svg { width: 24px; height: 24px; }
.apps .active { background: #485053; }

.run::after {
	content: "";
	position: absolute;
	bottom: 0; left: 4px; right: 4px;
	height: 2px;
	background: #76b9ed;
}

.active::after { left: 0; right: 0; }

.ghost {
	display: flex;
	gap: 12px;
	position: absolute;
	top: 0; left: 0;
	height: 8px;
	overflow: hidden;
	color: #173454;
	line-height: 6px;
	white-space: nowrap;
}

.ghost.right { left: 601px; gap: 4px; }
.ghost i { width: 12px; background: #12384b; }
.ghost .dark { color: #000; margin-right: 8px; }

.cpu, .clock {
	width: 72px;
	padding: 2px 0;
	text-align: center;
	line-height: 18px;
}

.cpu { margin-left: -240px; z-index: 1; }

.tray {
	display: flex;
	align-items: center;
	gap: 7px;
	width: 192px;
	padding: 0 4px 0 5px;
	z-index: 1;
}

.tray svg { width: 17px; height: 17px; }
.tray .kb { width: 24px; height: 14px; }

.lang {
	width: 16px;
	margin-right: 5px;
	font-size: 18px;
	text-align: center;
}

.clock { width: 64px; }

.notice {
	width: 55px;
	border-right: 1px solid #555;
	margin-right: 3px;
	padding-left: 16px;
}

.notice svg { width: 26px; fill: #fff; }

/* overlays */

.ball {
	position: absolute;
	top: -28px; left: 918px;
	width: 47px; height: 47px;
	padding-top: 24px;
	border: 3px solid #fff;
	border-radius: 50%;
	outline: 1px solid #888;
	background: #3cc45d;
	box-shadow: 0 1px 4px #555;
	color: #fff;
	font-weight: bold;
	text-align: center;
}

.ime {
	display: flex;
	align-items: center;
	gap: 6px;
	position: absolute;
	top: 3px; left: 1005px;
	height: 24px;
	padding-right: 3px;
	border: 1px solid #a9bfd5;
	background: #fff;
}

.ime svg { width: 16px; height: 16px; }
.ime .logo { width: 28px; height: 28px; margin: 0 -1px 2px -5px; }

.dialog {
	display: flex;
	flex-direction: column;
	position: absolute;
	top: 141px; bottom: 62px; left: 474px; right: 52px;
	padding: 0 5px 6px 7px;
	border: 1px solid #222;
	border-right: 2px solid #39a8c6;
	border-bottom-color: #5bc8e8;
	background: linear-gradient(#99b4d1, #b9cfe8 30px);
	font-family: "Liberation Sans", "Noto Sans CJK SC", sans-serif;
}

.dialog h2 {
	flex: none;
	height: 30px;
	font-size: 12px;
	font-weight: normal;
	line-height: 37px;
}

.options {
	display: flex;
	flex: none;
	height: 34px;
	padding: 0 127px;
	border-bottom: 1px solid #999;
	background: #f0f0f0;
}

.options label {
	display: flex;
	align-items: center;
	flex: 0 0 337px;
	gap: 3px;
}

.options input {
	appearance: none;
	width: 13px; height: 13px;
	border: 1px solid #333;
	border-radius: 50%;
	background: #fff;
}

.options input:checked { background: radial-gradient(#222 0 4px, #fff 4px); }

.cad {
	flex: 1;
	min-height: 0;
	width: 100%;
	background: #000;
}

.cad path, .cad circle { fill: none; stroke-width: 2; }
.cad .w path, .cad .w circle { stroke: #fff; stroke-width: 1; }
.cad path { shape-rendering: crispEdges; }
.cad .m { stroke: #f0f; }
.cad .g { stroke: #0f0; }
.cad .y { stroke: #ff0; }
.cad .c { stroke: #0ff; }
.cad .r { stroke: #f00; }
.cad .dot { stroke-width: 3; stroke-linecap: round; }
.cad .big-dot { stroke-width: 5; }

.cad text {
	fill: #fff;
	font: 300 20px "Noto Sans CJK SC", sans-serif;
}

.cad text.n { fill: #0f0; font: 19px "Liberation Serif", serif; }
.cad text.small { font-size: 16px; }
.cad text.big { font: 52px "Liberation Serif", serif; }

.actions {
	display: flex;
	justify-content: flex-end;
	flex: none;
	height: 45px;
	padding: 12px 25px 9px;
	border: solid #999;
	border-width: 0 1px 1px 0;
	background: #f0f0f0;
}

.actions button {
	width: 73px;
	border: 1px solid #adadad;
	background: #e1e1e1;
}
```
FILE: script.js
```js
// [icon, label], folders have the "folder" icon
let modules = [
	["niche", "壁龛(I)"], ["link", "连梁(G)"], ["lintel", "过梁(G)"], ["hole", "带形洞"], ["win", "带形窗"],
	["folder", "梁"],
	["beam", "梁(L)"], ["ring", "圈梁(E)"],
	["folder", "板"],
	["slab", "现浇板(B)"], ["spiral", "螺旋板(B)"], ["cap", "柱帽(V)"], ["slabhole", "板洞(N)"],
	["barmain", "板受力筋(S)"], ["bars", "板负筋(F)"], ["strip", "楼层板带(H)"],
	["folder", "基础"],
	["fbeam", "基础梁(F)"], ["raft", "筏板基础(M)"], ["pit", "集水坑(K)"], ["pier", "柱墩(Y)"],
	["barmain", "筏板主筋(R)"], ["bars", "筏板负筋(X)"], ["iso", "独立基础(P)"], ["footing", "条形基础(T)"],
	["pilecap", "桩承台(V)"], ["fbeam", "承台梁(F)"], ["pile", "桩(U)"], ["strip", "基础板带(W)"],
];

let parts = [[1, "(底)CT-65-1"]];
for (let i = 66; i <= 81; i++) {
	parts.push([0, "CT-"+i]);
	if (i==69) parts.push([1, "(顶)CT-69-2"]);
	parts.push([1, "(底)CT-"+i+"-1"]);
}

function addRow(list, child, last, chosen, icon, label) {
	let el = document.createElement("li");
	el.className = (child ? "child" : "parent")+(last ? " last" : "")+(chosen ? " chosen" : "");
	el.innerHTML = (child ? "<i class='twig'></i>" : "<svg class='chev'><use href='#down'/></svg>")+
		"<span class='name'><svg><use href='#"+icon+"'/></svg>"+label+"</span>";
	list.appendChild(el);
}

modules.forEach((m, i)=>{
	let next = modules[i+1];
	addRow(document.getElementById("modules"), m[0]!="folder", !next || next[0]=="folder", m[1]=="桩承台(V)", m[0], m[1]);
});

parts.forEach((p, i)=>{
	let next = parts[i+1];
	addRow(document.getElementById("parts"), p[0], !next || !next[0], !next, "gear", p[1]);
});
```
